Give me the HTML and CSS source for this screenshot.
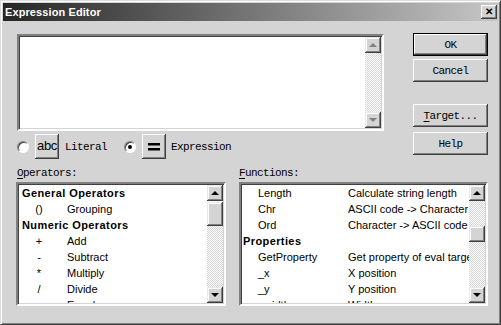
FILE: index.html
```html
<!DOCTYPE html>
<html lang="en">
<head>
    <meta charset="UTF-8">
    <title>Expression Editor</title>
    <link rel="stylesheet" href="styles.css">
</head>
<body>
    <div class="window">
        <div class="titlebar">
            <span class="title">Expression Editor</span>
            <span class="close">&#x2715;</span>
        </div>
        <div class="content">
            <div class="top">
                <div class="left">
                    <div class="editor sunken">
                        <div class="editor-text"></div>
                        <div class="vscroll">
                            <div class="sbtn"><span class="arrow up dim"></span></div>
                            <div class="track"></div>
                            <div class="sbtn"><span class="arrow down dim"></span></div>
                        </div>
                    </div>
                    <div class="mode-row">
                        <span class="radio"></span>
                        <span class="mode-btn abc">abc</span>
                        <span class="mono label-literal">Literal</span>
                        <span class="radio checked"></span>
                        <span class="mode-btn eq">
                            <svg width="12" height="8" viewBox="0 0 12 8"><rect x="0" y="0" width="12" height="2.5" fill="#000"/><rect x="0" y="5" width="12" height="2.5" fill="#000"/></svg>
                        </span>
                        <span class="mono label-expr">Expression</span>
                    </div>
                </div>
                <div class="buttons">
                    <button class="btn default">OK</button>
                    <button class="btn">Cancel</button>
                    <button class="btn spaced"><u>T</u>arget...</button>
                    <button class="btn">Help</button>
                </div>
            </div>

            <div class="labels">
                <span class="mono ops-label"><u>O</u>perators:</span>
                <span class="mono"><u>F</u>unctions:</span>
            </div>

            <div class="lists">
                <div class="listbox sunken ops">
                    <div class="list-body">
                        <div class="row head">General Operators</div>
                        <div class="row"><span class="sym">()</span><span class="name">Grouping</span></div>
                        <div class="row head">Numeric Operators</div>
                        <div class="row"><span class="sym">+</span><span class="name">Add</span></div>
                        <div class="row"><span class="sym">-</span><span class="name">Subtract</span></div>
                        <div class="row"><span class="sym">*</span><span class="name">Multiply</span></div>
                        <div class="row"><span class="sym">/</span><span class="name">Divide</span></div>
                        <div class="row"><span class="sym">=</span><span class="name">Equals</span></div>
                    </div>
                    <div class="vscroll">
                        <div class="sbtn"><span class="arrow up"></span></div>
                        <div class="thumb ops-thumb"></div>
                        <div class="track"></div>
                        <div class="sbtn"><span class="arrow down"></span></div>
                    </div>
                </div>
                <div class="listbox sunken funcs">
                    <div class="list-body">
                        <div class="row"><span class="fname">Length</span><span class="desc">Calculate string length</span></div>
                        <div class="row"><span class="fname">Chr</span><span class="desc">ASCII code -&gt; Character</span></div>
                        <div class="row"><span class="fname">Ord</span><span class="desc">Character -&gt; ASCII code</span></div>
                        <div class="row head">Properties</div>
                        <div class="row"><span class="fname">GetProperty</span><span class="desc">Get property of eval target</span></div>
                        <div class="row"><span class="fname">_x</span><span class="desc">X position</span></div>
                        <div class="row"><span class="fname">_y</span><span class="desc">Y position</span></div>
                        <div class="row"><span class="fname">_width</span><span class="desc">Width</span></div>
                    </div>
                    <div class="vscroll">
                        <div class="sbtn"><span class="arrow up"></span></div>
                        <div class="track short"></div>
                        <div class="thumb funcs-thumb"></div>
                        <div class="track"></div>
                        <div class="sbtn"><span class="arrow down"></span></div>
                    </div>
                </div>
            </div>
        </div>
    </div>
</body>
</html>
```

FILE: styles.css
```css
body {
    margin: 0;
    background-color: #d4d4d4;
    font-family: "Liberation Sans", Arial, sans-serif;
}
.window {
    width: 501px;
    height: 325px;
    box-sizing: border-box;
    padding: 2px;
    border: 1px solid;
    border-color: #dcdcdc #404040 #404040 #dcdcdc;
    box-shadow: inset 1px 1px #fff, inset -1px -1px #808080;
    background-color: #d4d4d4;
    overflow: hidden;
}
.titlebar {
    height: 18px;
    display: flex;
    align-items: center;
    justify-content: space-between;
    padding-left: 2px;
    background: linear-gradient(to right, #262626, #c6c6c6);
}
.title {
    color: #fff;
    font-weight: bold;
    font-size: 11px;
    letter-spacing: 0.1px;
}
.close {
    width: 16px;
    height: 14px;
    margin-right: 1px;
    box-sizing: border-box;
    background-color: #d4d4d4;
    box-shadow: inset -1px -1px #404040, inset 1px 1px #fff, inset -2px -2px #808080;
    font-size: 10px;
    font-weight: bold;
    line-height: 14px;
    text-align: center;
    color: #000;
}
.content {
    padding: 12px 0 0 13px;
}
.mono {
    font-family: "Liberation Mono", "Courier New", monospace;
    font-size: 11px;
    letter-spacing: -0.6px;
    color: #000;
}
.sunken {
    box-sizing: border-box;
    border: 2px solid;
    border-color: #808080 #fff #fff #808080;
    box-shadow: inset 1px 1px #404040, inset -1px -1px #d4d4d4;
    padding: 1px;
    background-color: #fff;
}
.top {
    display: flex;
}
.left {
    margin-left: 1px;
}
.editor {
    width: 367px;
    height: 97px;
    margin-top: 1px;
    display: flex;
}
.editor-text {
    flex: 1;
}
.vscroll {
    width: 16px;
    display: flex;
    flex-direction: column;
}
.sbtn {
    width: 16px;
    height: 16px;
    flex: none;
    box-sizing: border-box;
    background-color: #d4d4d4;
    box-shadow: inset -1px -1px #404040, inset 1px 1px #e8e8e8, inset -2px -2px #808080, inset 2px 2px #fff;
    display: flex;
    align-items: center;
    justify-content: center;
}
.thumb {
    height: 16px;
    flex: none;
    background-color: #d4d4d4;
    box-shadow: inset -1px -1px #404040, inset 1px 1px #e8e8e8, inset -2px -2px #808080, inset 2px 2px #fff;
}
.ops-thumb {
    height: 24px;
    margin-top: 1px;
}
.track {
    flex: 1;
    background: repeating-conic-gradient(#d4d4d4 0 25%, #fff 0 50%) 0 0 / 2px 2px;
}
.track.short {
    flex: none;
    height: 25px;
}
.arrow {
    width: 0;
    height: 0;
    border-left: 4px solid transparent;
    border-right: 4px solid transparent;
}
.arrow.up {
    border-bottom: 4px solid #000;
}
.arrow.down {
    border-top: 4px solid #000;
}
.arrow.up.dim {
    border-bottom-color: #808080;
}
.arrow.down.dim {
    border-top-color: #808080;
}
.mode-row {
    height: 25px;
    margin-top: 3px;
    display: flex;
    align-items: center;
}
.radio {
    width: 12px;
    height: 12px;
    box-sizing: border-box;
    border-radius: 50%;
    background-color: #fff;
    border: 1px solid;
    border-color: #808080 #fff #fff #808080;
    box-shadow: inset 1px 1px #404040;
    display: flex;
    align-items: center;
    justify-content: center;
}
.radio.checked::after {
    content: "";
    width: 4px;
    height: 4px;
    border-radius: 50%;
    background-color: #000;
}
.radio.checked {
    margin-left: 17px;
}
.mode-btn {
    width: 24px;
    height: 25px;
    margin-left: 6px;
    box-sizing: border-box;
    background-color: #d4d4d4;
    box-shadow: inset -1px -1px #404040, inset 1px 1px #fff, inset -2px -2px #808080;
    display: flex;
    align-items: center;
    justify-content: center;
}
.abc {
    font-family: "Liberation Sans", Arial, sans-serif;
    font-size: 13px;
    letter-spacing: -0.3px;
    padding-bottom: 2px;
}
.label-literal {
    margin-left: 6px;
}
.label-expr {
    margin-left: 5px;
}
.buttons {
    display: flex;
    flex-direction: column;
    margin-left: 29px;
}
.btn {
    width: 75px;
    height: 23px;
    margin-bottom: 3px;
    padding: 0;
    border: none;
    background-color: #d4d4d4;
    box-shadow: inset -1px -1px #404040, inset 1px 1px #fff, inset -2px -2px #808080;
    font-family: "Liberation Mono", "Courier New", monospace;
    font-size: 11px;
    letter-spacing: -0.6px;
    color: #000;
}
.btn.default {
    border: 1px solid #000;
    box-shadow: inset -1px -1px #404040, inset 1px 1px #fff, inset -2px -2px #808080;
}
.btn.spaced {
    margin-top: 19px;
    margin-bottom: 5px;
}
.btn u, .mono u {
    text-decoration-thickness: 1px;
    text-underline-offset: 2px;
}
.labels {
    display: flex;
    margin-top: 8px;
    margin-left: 1px;
    height: 12px;
    line-height: 12px;
}
.ops-label {
    width: 222px;
}
.lists {
    display: flex;
    margin-top: 3px;
}
.listbox {
    height: 124px;
    display: flex;
    overflow: hidden;
}
.ops {
    width: 210px;
}
.funcs {
    width: 249px;
    margin-left: 13px;
}
.list-body {
    flex: 1;
    overflow: hidden;
    padding-top: 0;
    font-size: 11px;
    color: #000;
}
.ops .list-body {
    padding-left: 3px;
}
.funcs .list-body {
    padding-left: 1px;
}
.row {
    height: 16px;
    line-height: 16px;
    display: flex;
    white-space: nowrap;
}
.row.head {
    font-weight: bold;
    letter-spacing: 0.4px;
}
.sym {
    width: 34px;
    text-align: center;
}
.name {
    margin-left: 11px;
}
.fname {
    width: 90px;
    padding-left: 15px;
    flex: none;
}
.desc {
    flex: none;
}
```
